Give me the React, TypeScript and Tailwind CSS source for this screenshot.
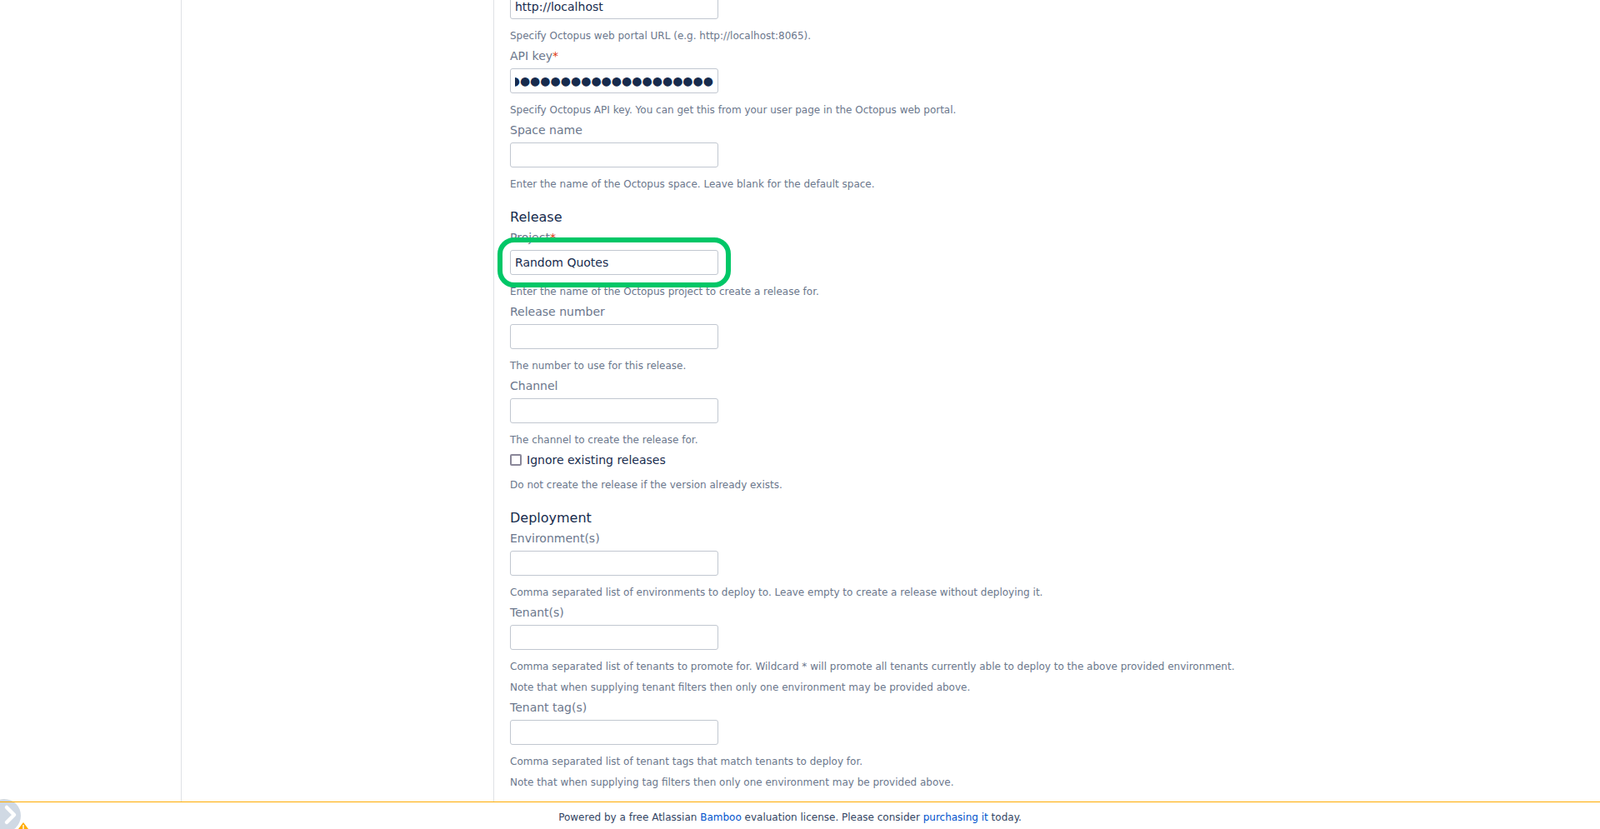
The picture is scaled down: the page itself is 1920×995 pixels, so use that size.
import React from "react";

function Field({ label, required, value, help }: { label: string; required?: boolean; value?: string; help: string[] }) {
  return (
    <div>
      <FieldLabel required={required}>{label}</FieldLabel>
      <TextBox value={value} />
      <Help lines={help} />
    </div>
  );
}

function FieldLabel({ children, required }: { children: React.ReactNode; required?: boolean }) {
  return (
    <label className="block h-5 mt-[5px] mb-[5px] text-sm leading-5 text-[#6b778c]">
      {children}
      {required && <span className="text-[#de350b]">*</span>}
    </label>
  );
}

function TextBox({ value }: { value?: string }) {
  return (
    <input
      readOnly
      type="text"
      value={value ?? ""}
      className="block w-[250px] h-[30px] px-[5px] bg-white border border-[#c1c7d0] rounded-[3px] text-sm text-[#172b4d] outline-none"
    />
  );
}

// password box, scrolled to the end of the key like in the screenshot
function PasswordBox() {
  return (
    <div className="w-[250px] h-[30px] px-[5px] bg-white border border-[#c1c7d0] rounded-[3px]">
      <div className="flex h-full justify-end items-center overflow-hidden whitespace-nowrap text-sm text-[#172b4d]">
        <span className="shrink-0">{"●".repeat(30)}</span>
      </div>
    </div>
  );
}

function Help({ lines }: { lines: string[] }) {
  return (
    <div className="mt-[10px] -mb-px">
      {lines.map((l) => (
        <div key={l} className="h-5 mb-[5px] last:mb-0 text-xs leading-5 text-[#6b778c]">
          {l}
        </div>
      ))}
    </div>
  );
}

function Heading({ children }: { children: React.ReactNode }) {
  return <h3 className="mt-[19px] -mb-[3px] h-6 text-base leading-6 font-normal text-[#172b4d]">{children}</h3>;
}

export default function App() {
  return (
    <div className="relative h-[995px] w-full overflow-hidden bg-white font-['DejaVu_Sans',sans-serif]">
      <div className="flex h-[962px]">
        <div className="w-[218px] shrink-0 border-r border-[#dfe1e6]" />
        <div className="w-[375px] shrink-0 border-r border-[#dfe1e6]" />
        <div className="pl-[19px] -mt-[7px]">
          <TextBox value="http://localhost" />
          <Help lines={["Specify Octopus web portal URL (e.g. http://localhost:8065)."]} />
          <div>
            <FieldLabel required>API key</FieldLabel>
            <PasswordBox />
            <Help lines={["Specify Octopus API key. You can get this from your user page in the Octopus web portal."]} />
          </div>
          <Field label="Space name" help={["Enter the name of the Octopus space. Leave blank for the default space."]} />
          <Heading>Release</Heading>
          <Field label="Project" required value="Random Quotes" help={["Enter the name of the Octopus project to create a release for."]} />
          <Field label="Release number" help={["The number to use for this release."]} />
          <Field label="Channel" help={["The channel to create the release for."]} />
          <label className="mt-[5px] flex h-5 items-center gap-[6px] text-sm text-[#172b4d]">
            <span className="block size-[14px] rounded-[2px] border-2 border-[#8a8799] bg-white" />
            Ignore existing releases
          </label>
          <Help lines={["Do not create the release if the version already exists."]} />
          <Heading>Deployment</Heading>
          <Field label="Environment(s)" help={["Comma separated list of environments to deploy to. Leave empty to create a release without deploying it."]} />
          <Field
            label="Tenant(s)"
            help={[
              "Comma separated list of tenants to promote for. Wildcard * will promote all tenants currently able to deploy to the above provided environment.",
              "Note that when supplying tenant filters then only one environment may be provided above.",
            ]}
          />
          <Field
            label="Tenant tag(s)"
            help={[
              "Comma separated list of tenant tags that match tenants to deploy for.",
              "Note that when supplying tag filters then only one environment may be provided above.",
            ]}
          />
        </div>
      </div>

      {/* green highlight drawn on top of the screenshot */}
      <div className="absolute left-[597px] top-[285px] w-[280px] h-[60px] rounded-[20px] border-[6px] border-[#00c767]" />

      <div className="absolute inset-x-0 top-[962px] h-[33px] bg-white pt-[9px] pr-6 text-center text-xs leading-5 text-[#344563]">
        Powered by a free Atlassian <a className="text-[#0052cc]">Bamboo</a> evaluation license. Please consider{" "}
        <a className="text-[#0052cc]">purchasing it</a> today.
      </div>

      <div className="absolute left-[-15px] top-[959px] size-10 rounded-full bg-[#d0d9e4]">
        <svg viewBox="0 0 40 40" className="size-10" fill="none" stroke="white" strokeWidth="4.5" strokeLinecap="round" strokeLinejoin="round">
          <path d="M23 10l9 9-9 9" />
        </svg>
      </div>
      <svg viewBox="0 0 12 8" className="absolute left-[22px] top-[987px] w-3 h-2">
        <path d="M6 0l6 8H0z" fill="#ffab00" />
        <path d="M5.3 3h1.4v5H5.3z" fill="white" />
      </svg>

      {/* footer rule sits above the sidebar toggle */}
      <div className="absolute inset-x-0 top-[962px] h-px bg-[#ffab00]" />
    </div>
  );
}
